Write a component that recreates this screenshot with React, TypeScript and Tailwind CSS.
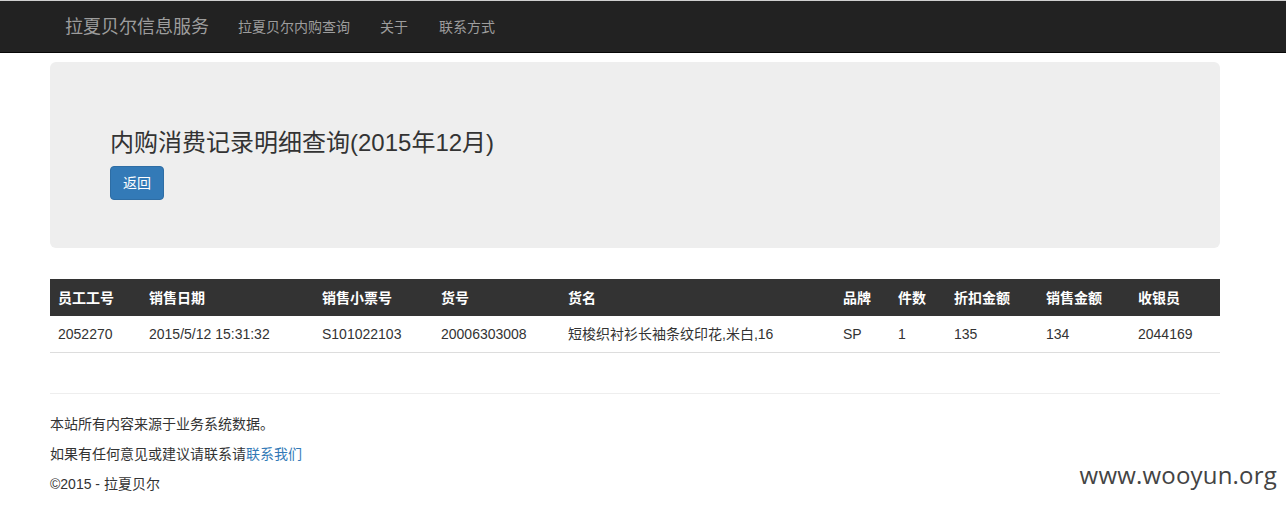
import React from 'react';

const COLS = [
  { label: '员工工号', w: 'w-[91px]' },
  { label: '销售日期', w: 'w-[173px]' },
  { label: '销售小票号', w: 'w-[119px]' },
  { label: '货号', w: 'w-[127px]' },
  { label: '货名', w: 'w-[275px]' },
  { label: '品牌', w: 'w-[55px]' },
  { label: '件数', w: 'w-[56px]' },
  { label: '折扣金额', w: 'w-[92px]' },
  { label: '销售金额', w: 'w-[92px]' },
  { label: '收银员', w: 'w-[90px]' },
];

const ROWS = [
  ['2052270', '2015/5/12 15:31:32', 'S101022103', '20006303008', '短梭织衬衫长袖条纹印花,米白,16', 'SP', '1', '135', '134', '2044169'],
];

const App: React.FC = () => {
  return (
    <div className="min-h-[505px] bg-white text-[14px] text-[#333] font-['Liberation_Sans','Noto_Sans_CJK_SC',sans-serif] leading-[20px] relative">
      {/* navbar */}
      <div className="h-[53px] border-t border-t-[#cfcfcf] bg-[#222] border-b border-b-[#080808]">
        <div className="ml-[50px] w-[1170px] px-[15px] flex items-center h-[51px]">
          <span className="text-[18px] text-[#9d9d9d] mr-[29px]">拉夏贝尔信息服务</span>
          <span className="text-[#9d9d9d] mr-[30px]">拉夏贝尔内购查询</span>
          <span className="text-[#9d9d9d] mr-[31px]">关于</span>
          <span className="text-[#9d9d9d]">联系方式</span>
        </div>
      </div>

      <div className="ml-[50px] w-[1170px]">
        <div className="mt-[9px] bg-[#eee] rounded-[6px] px-[60px] pt-[48px] pb-[48px]">
          <h2 className="mt-[20px] mb-[10px] text-[24px] leading-[26px] text-[#333]">内购消费记录明细查询(2015年12月)</h2>
          <button className="h-[34px] px-[12px] bg-[#337ab7] border border-[#2e6da4] rounded-[4px] text-white text-[14px]">返回</button>
        </div>

        <table className="mt-[31px] w-[1170px] table-fixed border-collapse">
          <thead>
            <tr className="bg-[#333] text-white h-[37px]">
              {COLS.map(c => (
                <th key={c.label} className={`${c.w} text-left font-bold px-[8px] py-0`}>{c.label}</th>
              ))}
            </tr>
          </thead>
          <tbody>
            {ROWS.map((r, i) => (
              <tr key={i} className="h-[36px] border-b border-[#ddd]">
                {r.map((v, j) => (
                  <td key={j} className="px-[8px] whitespace-nowrap">{v}</td>
                ))}
              </tr>
            ))}
          </tbody>
        </table>

        <hr className="mt-[40px] mb-[20px] border-t border-[#eee]" />
        <footer>
          <p className="mb-[10px]">本站所有内容来源于业务系统数据。</p>
          <p className="mb-[10px]">如果有任何意见或建议请联系请<span className="text-[#337ab7]">联系我们</span></p>
          <p>©2015 - 拉夏贝尔</p>
        </footer>
      </div>

      <div className="absolute right-[9px] top-[465px] text-[24px] text-[#444] font-['Open_Sans',sans-serif] tracking-[0.2px]">www.wooyun.org</div>
    </div>
  );
};

export default App;
